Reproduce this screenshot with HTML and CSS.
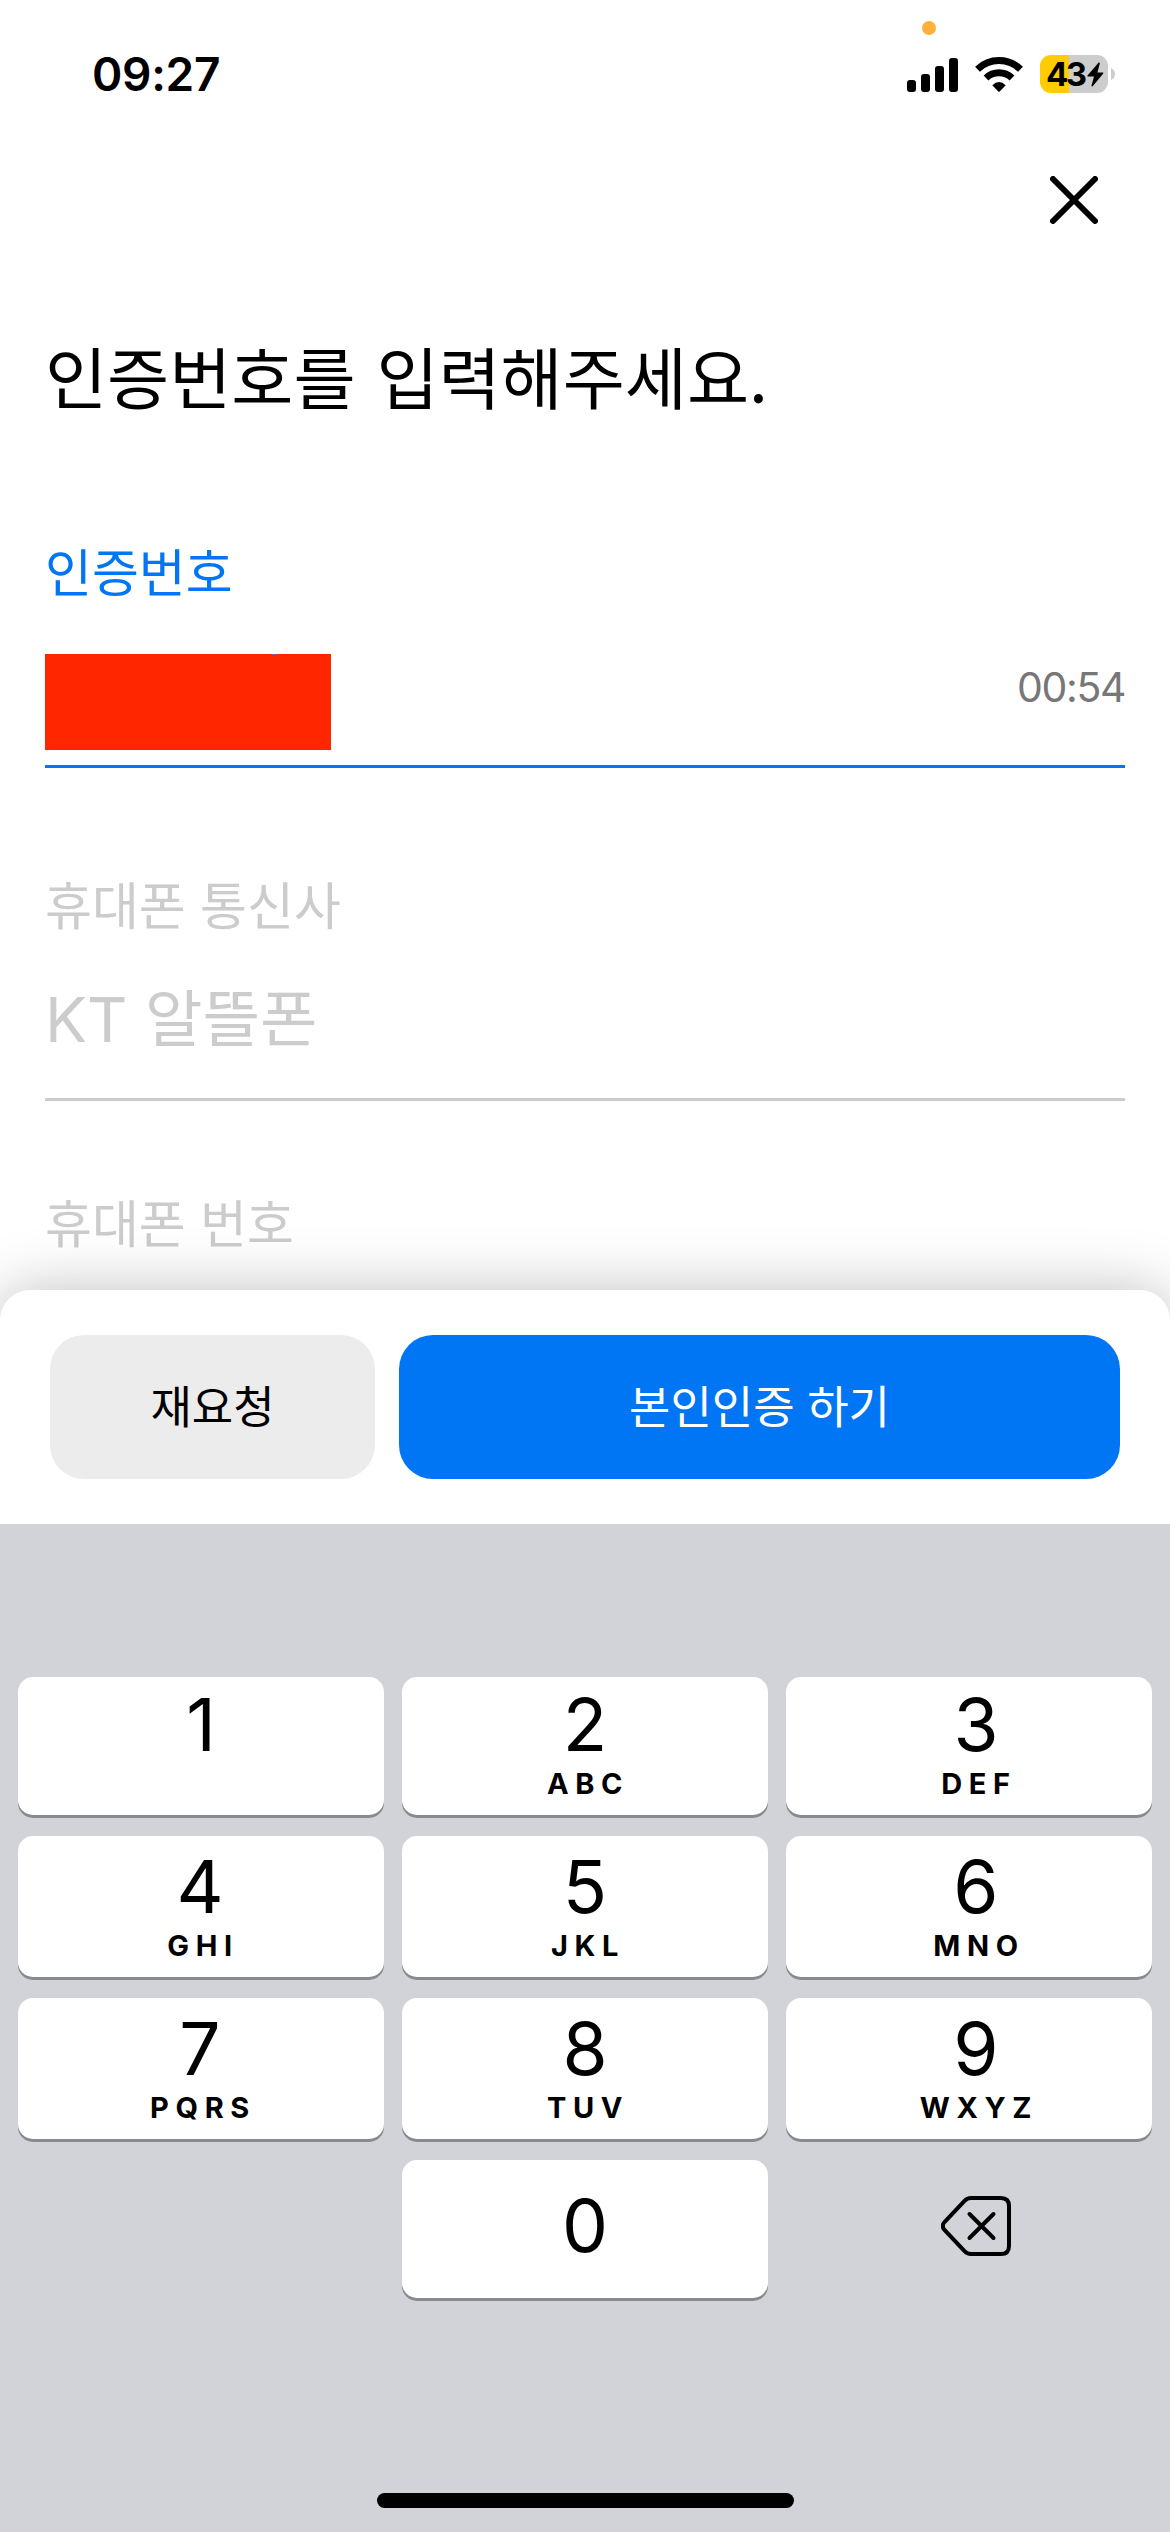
FILE: index.html
```html
<!DOCTYPE html>
<html lang="ko">
<head>
    <meta charset="UTF-8">
    <meta name="viewport" content="width=device-width, initial-scale=1.0">
    <title>인증번호 입력</title>
    <link rel="stylesheet" href="styles.css">
</head>
<body>
    <div class="screen">
        <header class="status-bar">
            <span class="rec-dot"></span>
            <div class="time">09:27</div>
            <div class="status-icons">
                <svg class="signal" width="52" height="36" viewBox="0 0 52 36">
                    <rect x="0" y="24" width="9" height="12" rx="3"/>
                    <rect x="14" y="18" width="9" height="18" rx="3"/>
                    <rect x="28" y="10" width="9" height="26" rx="3"/>
                    <rect x="42" y="2" width="9" height="34" rx="3"/>
                </svg>
                <svg class="wifi" width="48" height="36" viewBox="0 0 48 36">
                    <path class="wave" d="M2.5 13.2A31 31 0 0 1 45.5 13.2"/>
                    <path class="wave" d="M11 22A19 19 0 0 1 37 22"/>
                    <path d="M17.3 29.2Q24 22.8 30.7 29.2L24.7 35.4Q24 36 23.3 35.4Z"/>
                </svg>
                <div class="battery">
                    <div class="battery-body">
                        <span>43</span>
                        <svg width="17" height="25" viewBox="0 0 17 25">
                            <path d="M11.7.6L.5 13.6Q0 14.5 1 14.5H7L4.5 23.5Q4.5 25 5.7 24.2L16.3 11.4Q16.7 10.4 15.7 10.4H10.4L12.8 1.4Q12.8 0 11.7.6Z"/>
                        </svg>
                    </div>
                    <svg class="battery-cap" width="4" height="12" viewBox="0 0 4 12">
                        <path d="M0 0Q4 2 4 6Q4 10 0 12Z"/>
                    </svg>
                </div>
            </div>
        </header>

        <main class="content">
            <button class="close" aria-label="닫기">
                <svg width="48" height="48" viewBox="0 0 48 48">
                    <path d="M3 3L45 45M45 3L3 45"/>
                </svg>
            </button>
            <h1>인증번호를 입력해주세요.</h1>

            <div class="field active">
                <label>인증번호</label>
                <div class="value">
                    <span class="masked"></span>
                    <span class="timer">00:54</span>
                </div>
            </div>
            <div class="field">
                <label>휴대폰 통신사</label>
                <div class="value">KT 알뜰폰</div>
            </div>
            <div class="field">
                <label>휴대폰 번호</label>
            </div>
        </main>

        <div class="sheet">
            <button class="retry">재요청</button>
            <button class="confirm">본인인증 하기</button>
        </div>

        <div class="keyboard">
            <div class="keys">
                <div class="key"><b>1</b></div>
                <div class="key"><b>2</b><i>ABC</i></div>
                <div class="key right"><b>3</b><i>DEF</i></div>
                <div class="key left"><b>4</b><i>GHI</i></div>
                <div class="key"><b>5</b><i>JKL</i></div>
                <div class="key right"><b>6</b><i>MNO</i></div>
                <div class="key left"><b>7</b><i>PQRS</i></div>
                <div class="key"><b>8</b><i>TUV</i></div>
                <div class="key right"><b>9</b><i>WXYZ</i></div>
                <div class="blank"></div>
                <div class="key zero"><b>0</b></div>
                <div class="delete">
                    <svg width="70" height="60" viewBox="0 0 70 60">
                        <path d="M30 2H60Q68 2 68 10V50Q68 58 60 58H30Q26 58 23.500 55L3.500 34Q0 30 3.500 26L23.500 5Q26 2 30 2Z"/>
                        <path d="M28.500 18L52.500 42M52.500 18L28.500 42"/>
                    </svg>
                </div>
            </div>
            <div class="home-bar"></div>
        </div>
    </div>
</body>
</html>
```

FILE: styles.css
```css
* {
    box-sizing: border-box;
}
body {
    margin: 0;
    background-color: #fff;
    color: #000;
    font-family: "Noto Sans CJK KR", sans-serif;
}
button {
    padding: 0;
    border: none;
    background: none;
    font-family: inherit;
    color: inherit;
}
.screen {
    width: 1170px;
    height: 2532px;
    display: flex;
    flex-direction: column;
    overflow: hidden;
}

/* status bar */
.status-bar {
    position: relative;
    height: 148px;
    padding: 0 55px 0 92px;
    display: flex;
    justify-content: space-between;
    align-items: center;
    font-family: Inter, sans-serif;
}
.rec-dot {
    position: absolute;
    left: 922px;
    top: 21px;
    width: 14px;
    height: 14px;
    border-radius: 50%;
    background-color: #ffb13b;
}
.time {
    font-size: 46px;
    font-weight: 600;
    letter-spacing: -0.3px;
}
.status-icons {
    display: flex;
    align-items: center;
}
.signal {
    margin-right: 16px;
}
.wifi {
    margin-right: 17px;
}
.wave {
    fill: none;
    stroke: #000;
    stroke-width: 7;
}
.battery {
    display: flex;
    align-items: center;
    gap: 3px;
}
.battery-body {
    width: 68px;
    height: 38px;
    padding-left: 6px;
    display: flex;
    align-items: center;
    border-radius: 11px;
    background: linear-gradient(to right, #ffcc00 29px, #cdcdcd 29px);
    font-size: 33px;
    font-weight: 700;
    letter-spacing: -2.5px;
}
.battery-body span {
    width: 41px;
}
.battery-cap {
    fill: #cdcdcd;
}

/* form */
.content {
    height: 1142px;
    padding: 28px 45px 0;
    display: flex;
    flex-direction: column;
}
.close {
    align-self: flex-end;
    margin-right: 27px;
    height: 48px;
}
.close svg {
    display: block;
    fill: none;
    stroke: #000;
    stroke-width: 6;
    stroke-linecap: round;
}
h1 {
    margin: 101px 0 0;
    height: 100px;
    line-height: 100px;
    font-size: 67.5px;
    font-weight: 400;
    word-spacing: 2px;
}
.field {
    display: flex;
    flex-direction: column;
    height: 228px;
    margin-bottom: 105px;
    border-bottom: 3px solid #ccc;
    color: #ccc;
    flex-shrink: 0;
}
.field label {
    height: 60px;
    line-height: 60px;
    font-size: 51px;
    font-weight: 400;
}
.field + .field {
    margin-bottom: 90px;
}
.value {
    height: 96px;
    line-height: 96px;
    margin-top: 38px;
    font-family: Inter, "Noto Sans CJK KR", sans-serif;
    font-size: 62.5px;
    font-weight: 400;
}
.active {
    margin-top: 115px;
    border-color: #0176f4;
}
.active label {
    color: #0176f4;
}
.active .value {
    display: flex;
    justify-content: space-between;
    margin-top: 54px;
}
.masked {
    width: 286px;
    background-color: #ff2600;
}
/* top of the text cursor */
.masked::before {
    content: "";
    display: block;
    width: 4px;
    height: 1px;
    margin-left: 227px;
    background-color: #8a5a90;
}
.timer {
    height: 66px;
    line-height: 66px;
    font-size: 41px;
    letter-spacing: -1.4px;
    color: #777;
}

/* bottom sheet */
.sheet {
    position: relative;
    height: 234px;
    padding: 45px 50px;
    display: flex;
    gap: 24px;
    border-radius: 30px 30px 0 0;
    background-color: #fff;
    box-shadow: 0 0 60px rgba(0, 0, 0, 0.25);
}
.sheet button {
    padding-bottom: 6px;
    border-radius: 34px;
    font-size: 45px;
    font-weight: 400;
}
.retry {
    width: 325px;
    background-color: #ececec;
}
.confirm {
    flex: 1;
    background-color: #0176f4;
    color: #fff;
}

/* number pad */
.keyboard {
    position: relative;
    flex: 1;
    padding: 153px 18px 0;
    background-color: #d2d3d8;
    font-family: Inter, sans-serif;
}
.keys {
    display: grid;
    grid-template-columns: repeat(3, 366px);
    grid-template-rows: 138px 141px 141px 138px;
    column-gap: 18px;
    row-gap: 21px;
}
.key {
    display: flex;
    flex-direction: column;
    align-items: center;
    padding-top: 12px;
    border-radius: 15px;
    background-color: #fff;
    box-shadow: 0 3px 0 #898a8d;
}
.key:nth-child(n+4) {
    padding-top: 15px;
}
.key.left {
    padding-right: 2px;
}
.key.right {
    padding-left: 14px;
}
.key b {
    height: 72px;
    line-height: 72px;
    font-size: 73px;
    font-weight: 400;
}
.key i {
    height: 46px;
    line-height: 46px;
    font-size: 29px;
    font-style: normal;
    font-weight: 650;
    letter-spacing: 6.6px;
    margin-right: -6px;
}
.key.zero {
    padding-top: 30px;
}
.delete {
    display: flex;
    justify-content: center;
    align-items: center;
    padding: 0 0 7px 14px;
}
.delete svg {
    fill: none;
    stroke: #000;
    stroke-width: 4;
    stroke-linecap: round;
}
.home-bar {
    position: absolute;
    left: 377px;
    bottom: 24px;
    width: 417px;
    height: 15px;
    border-radius: 8px;
    background-color: #000;
}
```
